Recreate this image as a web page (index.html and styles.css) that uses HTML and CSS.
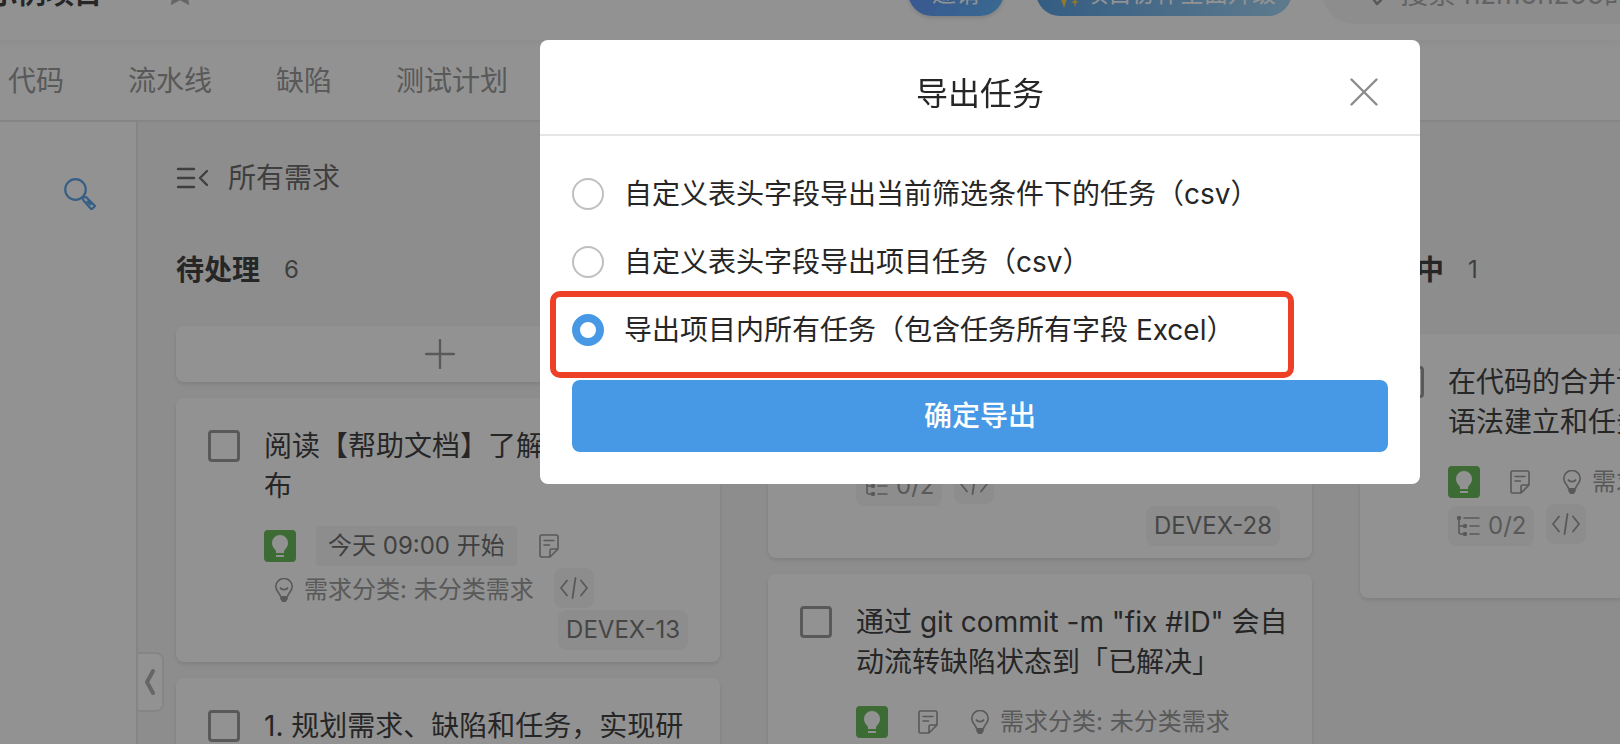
FILE: index.html
```
<!DOCTYPE html>
<html lang="zh-CN">
<head>
    <meta charset="UTF-8">
    <meta name="viewport" content="width=device-width, initial-scale=1.0">
    <title>导出任务</title>
    <link rel="stylesheet" href="styles.css">
</head>
<body>
    <svg class="sprite" aria-hidden="true">
        <symbol id="bulb" viewBox="0 0 32 32">
            <path fill="currentColor" d="M16 5a8 8 0 0 0-8 8c0 3 1.500 5 3 6.500.8.8 1 1.800 1 3V23h8v-.5c0-1.200.2-2.200 1-3 1.500-1.500 3-3.500 3-6.500a8 8 0 0 0-8-8zM12 25h8v2h-8z"/>
        </symbol>
        <symbol id="bulb-line" viewBox="0 0 24 24">
            <path fill="none" stroke="currentColor" stroke-width="1.600" d="M8.500 18.500C8 15.500 3.800 13 3.800 8.500a8.200 8 0 0 1 16.400 0c0 4.500-4.200 7-4.700 10M8 9.500c1.500 2.800 6.500 2.800 8 0"/>
            <path fill="currentColor" d="M8.200 18h7.600v3l-2 3h-3.600l-2-3z"/>
        </symbol>
        <symbol id="note" viewBox="0 0 24 24">
            <path fill="none" stroke="currentColor" stroke-width="1.600" stroke-linejoin="round" stroke-linecap="round" d="M13 23H4.500A1.500 1.500 0 0 1 3 21.500v-19A1.500 1.500 0 0 1 4.500 1h15A1.500 1.500 0 0 1 21 2.500V15l-8 8v-6.500a1.500 1.500 0 0 1 1.500-1.500H21M7 6.500h10M7 11h5.500"/>
        </symbol>
        <symbol id="code" viewBox="0 0 28 24">
            <path fill="none" stroke="currentColor" stroke-width="1.800" stroke-linejoin="round" stroke-linecap="round" d="M7 4.500L1 12l6 7.500M21 4.500l6 7.500-6 7.500M15.500 2l-3 20"/>
        </symbol>
        <symbol id="subtask" viewBox="0 0 24 24">
            <path fill="none" stroke="currentColor" stroke-width="1.600" stroke-linecap="round" d="M3 4v14a2 2 0 0 0 2 2h4M3 12h6M8 4h15M14 12h9M14 20h9"/>
            <circle cx="3" cy="4" r="2.200" fill="currentColor"/>
            <circle cx="9" cy="12" r="2.200" fill="currentColor"/>
            <circle cx="9" cy="20" r="2.200" fill="currentColor"/>
        </symbol>
    </svg>

    <div class="page">
        <header class="topbar">
            <span class="project">示例项目</span>
            <svg class="star" viewBox="0 0 32 32"><path fill="currentColor" d="M16 1l4.600 9.400 10.300 1.400-7.500 7.200 1.900 10.200L16 24.300l-9.300 4.900 1.900-10.200-7.500-7.200 10.300-1.400z"/></svg>
            <button class="pill invite">邀请</button>
            <button class="pill upgrade">
                <svg class="sparkle" viewBox="0 0 28 28"><path fill="#ffcb2e" d="M12 4l3 9 8 3-8 3-3 9-3-9-8-3 8-3zM23 2l1 4 3 1-3 1-1 4-1-4-3-1 3-1zM23 17l1 4 3 1-3 1-1 4-1-4-3-1 3-1z"/></svg>
                项目协作全面升级
            </button>
            <label class="search">
                <svg class="search-icon" viewBox="0 0 28 28"><path fill="none" stroke="currentColor" stroke-width="2.500" stroke-linejoin="round" d="M11 2a8 8 0 1 1 0 16 8 8 0 0 1 0-16zM15 18l6 8 4-4-5-7"/></svg>
                <input type="text" placeholder="搜索 nzmonz66的团队" aria-label="搜索">
            </label>
        </header>

        <nav class="tabs">
            <a href="#">代码</a>
            <a href="#">流水线</a>
            <a href="#">缺陷</a>
            <a href="#">测试计划</a>
        </nav>

        <div class="main">
            <aside class="sidebar">
                <button class="icon-btn" aria-label="搜索">
                    <svg class="magnifier" viewBox="0 0 32 32"><path fill="none" stroke="currentColor" stroke-width="2.200" stroke-linejoin="round" d="M11.500 1.200a10.300 10.300 0 1 1 0 20.600 10.300 10.300 0 0 1 0-20.600zM18.500 19.500l3.500-.5 9 9-3.500 3.500-8-9zM23 23l4 4"/></svg>
                </button>
                <button class="fold" aria-label="收起">
                    <svg class="fold-icon" viewBox="0 0 12 28"><path fill="none" stroke="currentColor" stroke-width="4" stroke-linecap="round" stroke-linejoin="round" d="M9 3L3 14l6 11"/></svg>
                </button>
            </aside>

            <main class="board">
                <div class="board-title">
                    <svg class="menu-icon" viewBox="0 0 32 24"><path fill="none" stroke="currentColor" stroke-width="2.400" stroke-linecap="round" stroke-linejoin="round" d="M2 3h16M2 12h16M2 21h16M31 5l-7 7 7 7"/></svg>
                    所有需求
                </div>
                <div class="columns">
                    <section class="column todo">
                        <h2>待处理 <span>6</span></h2>
                        <div class="list">
                            <button class="add" aria-label="新建任务">
                                <svg class="plus" viewBox="0 0 28 28"><path stroke="currentColor" stroke-width="2.200" stroke-linecap="round" d="M14 1v26M1 14h26"/></svg>
                            </button>
                            <article class="card">
                                <input type="checkbox" aria-label="完成 DEVEX-13">
                                <div class="content">
                                    <h3>阅读【帮助文档】了解如何快速发布</h3>
                                    <div class="meta">
                                        <span class="type"><svg><use href="#bulb"/></svg></span>
                                        <span class="date">今天 09:00 开始</span>
                                        <span class="note"><svg><use href="#note"/></svg></span>
                                        <span class="category"><svg><use href="#bulb-line"/></svg>需求分类: 未分类需求</span>
                                        <span class="code"><svg><use href="#code"/></svg></span>
                                    </div>
                                    <div class="task-id">DEVEX-13</div>
                                </div>
                            </article>
                            <article class="card">
                                <input type="checkbox" aria-label="完成规划需求">
                                <div class="content">
                                    <h3>1. 规划需求、缺陷和任务，实现研发管理</h3>
                                </div>
                            </article>
                        </div>
                    </section>

                    <section class="column doing">
                        <h2>开发中 <span>2</span></h2>
                        <div class="list">
                            <article class="card">
                                <input type="checkbox" aria-label="完成 DEVEX-28">
                                <div class="content">
                                    <h3>通过代码提交关联任务，<br>自动更新任务状态</h3>
                                    <div class="meta">
                                        <span class="type"><svg><use href="#bulb"/></svg></span>
                                        <span class="note"><svg><use href="#note"/></svg></span>
                                        <span class="category"><svg><use href="#bulb-line"/></svg>需求分类: 未分类需求</span>
                                        <span class="subtask"><svg><use href="#subtask"/></svg>0/2</span>
                                        <span class="code"><svg><use href="#code"/></svg></span>
                                    </div>
                                    <div class="task-id">DEVEX-28</div>
                                </div>
                            </article>
                            <article class="card">
                                <input type="checkbox" aria-label="完成 git commit">
                                <div class="content">
                                    <h3>通过 git commit -m "fix #ID" 会自动流转缺陷状态到「已解决」</h3>
                                    <div class="meta">
                                        <span class="type"><svg><use href="#bulb"/></svg></span>
                                        <span class="note"><svg><use href="#note"/></svg></span>
                                        <span class="category"><svg><use href="#bulb-line"/></svg>需求分类: 未分类需求</span>
                                    </div>
                                </div>
                            </article>
                        </div>
                    </section>

                    <section class="column testing">
                        <h2>测试中 <span>1</span></h2>
                        <div class="list">
                            <article class="card">
                                <input type="checkbox" aria-label="完成合并请求">
                                <div class="content">
                                    <h3>在代码的合并请求中使用 #ID<br>语法建立和任务的关联</h3>
                                    <div class="meta">
                                        <span class="type"><svg><use href="#bulb"/></svg></span>
                                        <span class="note"><svg><use href="#note"/></svg></span>
                                        <span class="category"><svg><use href="#bulb-line"/></svg>需求分类: 未分类需求</span>
                                        <span class="subtask"><svg><use href="#subtask"/></svg>0/2</span>
                                        <span class="code"><svg><use href="#code"/></svg></span>
                                    </div>
                                    <div class="task-id">DEVEX-29</div>
                                </div>
                            </article>
                        </div>
                    </section>
                </div>
            </main>
        </div>
    </div>

    <div class="overlay">
        <div class="modal" role="dialog" aria-labelledby="exportTitle">
            <div class="modal-header">
                <h1 id="exportTitle">导出任务</h1>
                <button class="close" aria-label="关闭">
                    <svg class="close-icon" viewBox="0 0 28 28"><path stroke="currentColor" stroke-width="2.400" stroke-linecap="round" d="M1.500 1.500l25 25M26.500 1.500l-25 25"/></svg>
                </button>
            </div>
            <form class="modal-body">
                <label class="option"><input type="radio" name="export">自定义表头字段导出当前筛选条件下的任务（csv）</label>
                <label class="option"><input type="radio" name="export">自定义表头字段导出项目任务（csv）</label>
                <label class="option marked"><input type="radio" name="export" checked>导出项目内所有任务（包含任务所有字段 Excel）</label>
                <button type="button" class="submit">确定导出</button>
            </form>
        </div>
    </div>
</body>
</html>
```
FILE: styles.css
```
* { box-sizing: border-box; }
body { margin: 0; height: 100vh; overflow: hidden; font-family: Inter, "Noto Sans CJK SC", sans-serif; font-size: 28px; line-height: 40px; color: #262626; background: #f5f5f5; }
h1, h2, h3 { margin: 0; font-size: inherit; font-weight: normal; }
button, input { font: inherit; color: inherit; }
button { padding: 0; border: none; background: none; cursor: pointer; }
a { color: inherit; text-decoration: none; }
svg { display: block; flex: none; }
.sprite { position: absolute; width: 0; height: 0; }

.page { height: 100vh; display: flex; flex-direction: column; overflow: hidden; }

/* top bar, scrolled partly out of view */
.topbar { flex: none; display: flex; align-items: center; height: 96px; margin-top: -56px; margin-left: -10px; background: #fff; box-shadow: 0 2px 12px rgba(0, 0, 0, 0.06); z-index: 1; }
.project { padding-top: 4px; font-weight: bold; }
.star { width: 32px; height: 32px; margin-left: 62px; color: #a6a6a6; }
.pill { display: flex; align-items: center; justify-content: center; gap: 4px; height: 48px; padding: 4px 16px 0; border-radius: 24px; color: #fff; font-size: 24px; white-space: nowrap; }
.invite { width: 96px; margin-left: auto; background: linear-gradient(135deg, #4e7dfa, #4bb0fa); box-shadow: 0 2px 4px rgba(0, 0, 0, 0.15); }
.upgrade { margin-left: 32px; background: linear-gradient(90deg, #4294e0, #96d0f5); }
.sparkle { width: 28px; height: 28px; }
.search { display: flex; align-items: center; gap: 16px; width: 328px; height: 64px; margin-left: 30px; margin-right: -30px; padding-left: 34px; border-radius: 32px; background: #f5f5f5; color: #8c8c8c; }
.search-icon { width: 28px; height: 28px; }
.search input { width: 100%; padding: 4px 0 0; border: none; outline: none; background: none; }
.search input::placeholder { color: #a0a0a0; }

.tabs { flex: none; display: flex; align-items: center; gap: 64px; height: 82px; padding-top: 2px; padding-left: 8px; border-bottom: 2px solid #e5e5e5; background: #fff; color: #8c8c8c; }

.main { flex: 1; display: flex; min-height: 0; }
.sidebar { position: relative; flex: none; width: 138px; padding: 56px 40px 0 64px; border-right: 2px solid #e5e5e5; background: #fff; }
.icon-btn { color: #4799e6; }
.magnifier { width: 32px; height: 32px; }
.fold { position: absolute; left: 100%; bottom: 32px; display: flex; align-items: center; justify-content: center; width: 26px; height: 60px; margin-left: 2px; border: 2px solid #e5e5e5; border-left: none; border-radius: 0 8px 8px 0; background: #fff; color: #a6a6a6; }
.fold-icon { width: 12px; height: 28px; }

.board { flex: 1; min-width: 0; padding: 36px 0 0 38px; overflow: hidden; }
.board-title { display: flex; align-items: center; gap: 20px; color: #595959; }
.menu-icon { width: 32px; height: 24px; }
.columns { display: flex; gap: 48px; margin-top: 52px; }
.column { flex: none; width: 544px; }
.column h2 { display: flex; gap: 24px; font-weight: bold; }
.column h2 span { font-size: 24px; font-weight: normal; color: #595959; }
.list { display: flex; flex-direction: column; gap: 16px; }
.todo .list { padding-top: 36px; }
.doing .list { padding-top: 4px; }
.testing .list { padding-top: 44px; }

.add { display: flex; align-items: center; justify-content: center; height: 56px; padding-right: 16px; border-radius: 8px; background: #fff; box-shadow: 0 2px 4px rgba(0, 0, 0, 0.12); color: #8c8c8c; }
.plus { width: 30px; height: 30px; }
.card { display: flex; gap: 24px; padding: 28px 32px 12px; border-radius: 8px; background: #fff; box-shadow: 0 2px 4px rgba(0, 0, 0, 0.12); }
.card input { appearance: none; flex: none; width: 32px; height: 32px; margin: 4px 0 0; border: 3px solid #8c8c8c; border-radius: 4px; }
.card h3 { margin-right: -16px; }
.content { flex: 1; min-width: 0; }
.meta { display: flex; flex-wrap: wrap; gap: 4px 12px; margin-top: 20px; font-size: 24px; color: #8c8c8c; }
.meta span { display: flex; align-items: center; justify-content: center; height: 40px; white-space: nowrap; }
.meta svg { width: 24px; height: 24px; }
.type { width: 32px; margin-right: 8px; color: #fff; }
.meta .type { height: 32px; margin-top: 4px; border-radius: 4px; background: #52b043; }
.meta .type svg { width: 32px; height: 32px; }
.date { padding: 0 12px; border-radius: 4px; background: #f5f5f5; color: #595959; }
.note { width: 40px; }
.category { gap: 8px; padding: 0 8px; }
.subtask { gap: 8px; padding: 0 8px; border-radius: 8px; background: #f5f5f5; }
.code { width: 40px; margin: -2px 0 2px; border-radius: 8px; background: #f5f5f5; }
.meta .code svg { width: 28px; }
.task-id { width: fit-content; margin-left: auto; padding: 0 8px; border-radius: 8px; background: #f5f5f5; font-size: 24px; color: #666; }

.overlay { position: fixed; inset: 0; z-index: 10; display: flex; justify-content: flex-end; align-items: flex-start; padding: 40px 200px; background: rgba(38, 38, 38, 0.5); }
.modal { width: 100%; max-width: 880px; border-radius: 8px; background: #fff; }
.modal-header { position: relative; display: flex; align-items: center; justify-content: center; height: 96px; padding-top: 14px; border-bottom: 2px solid #e5e5e5; font-size: 32px; }
.close { position: absolute; top: 38px; right: 42px; color: #8c8c8c; }
.close-icon { width: 28px; height: 28px; }
.modal-body { padding: 24px 32px 32px; }
.option { position: relative; display: flex; align-items: center; gap: 20px; height: 68px; }
.option input { appearance: none; flex: none; width: 32px; height: 32px; margin: 0; border: 2px solid #bfbfbf; border-radius: 50%; background: #fff; }
.option input:checked { border: 8px solid #4799e6; }
/* red frame round the chosen option */
.marked::after { content: ""; position: absolute; inset: -5px 94px -14px -22px; border: 6px solid #ee4026; border-radius: 10px; pointer-events: none; }
.submit { display: block; width: 100%; height: 72px; margin-top: 16px; border-radius: 8px; background: #4799e6; color: #fff; font-weight: 500; }
```
